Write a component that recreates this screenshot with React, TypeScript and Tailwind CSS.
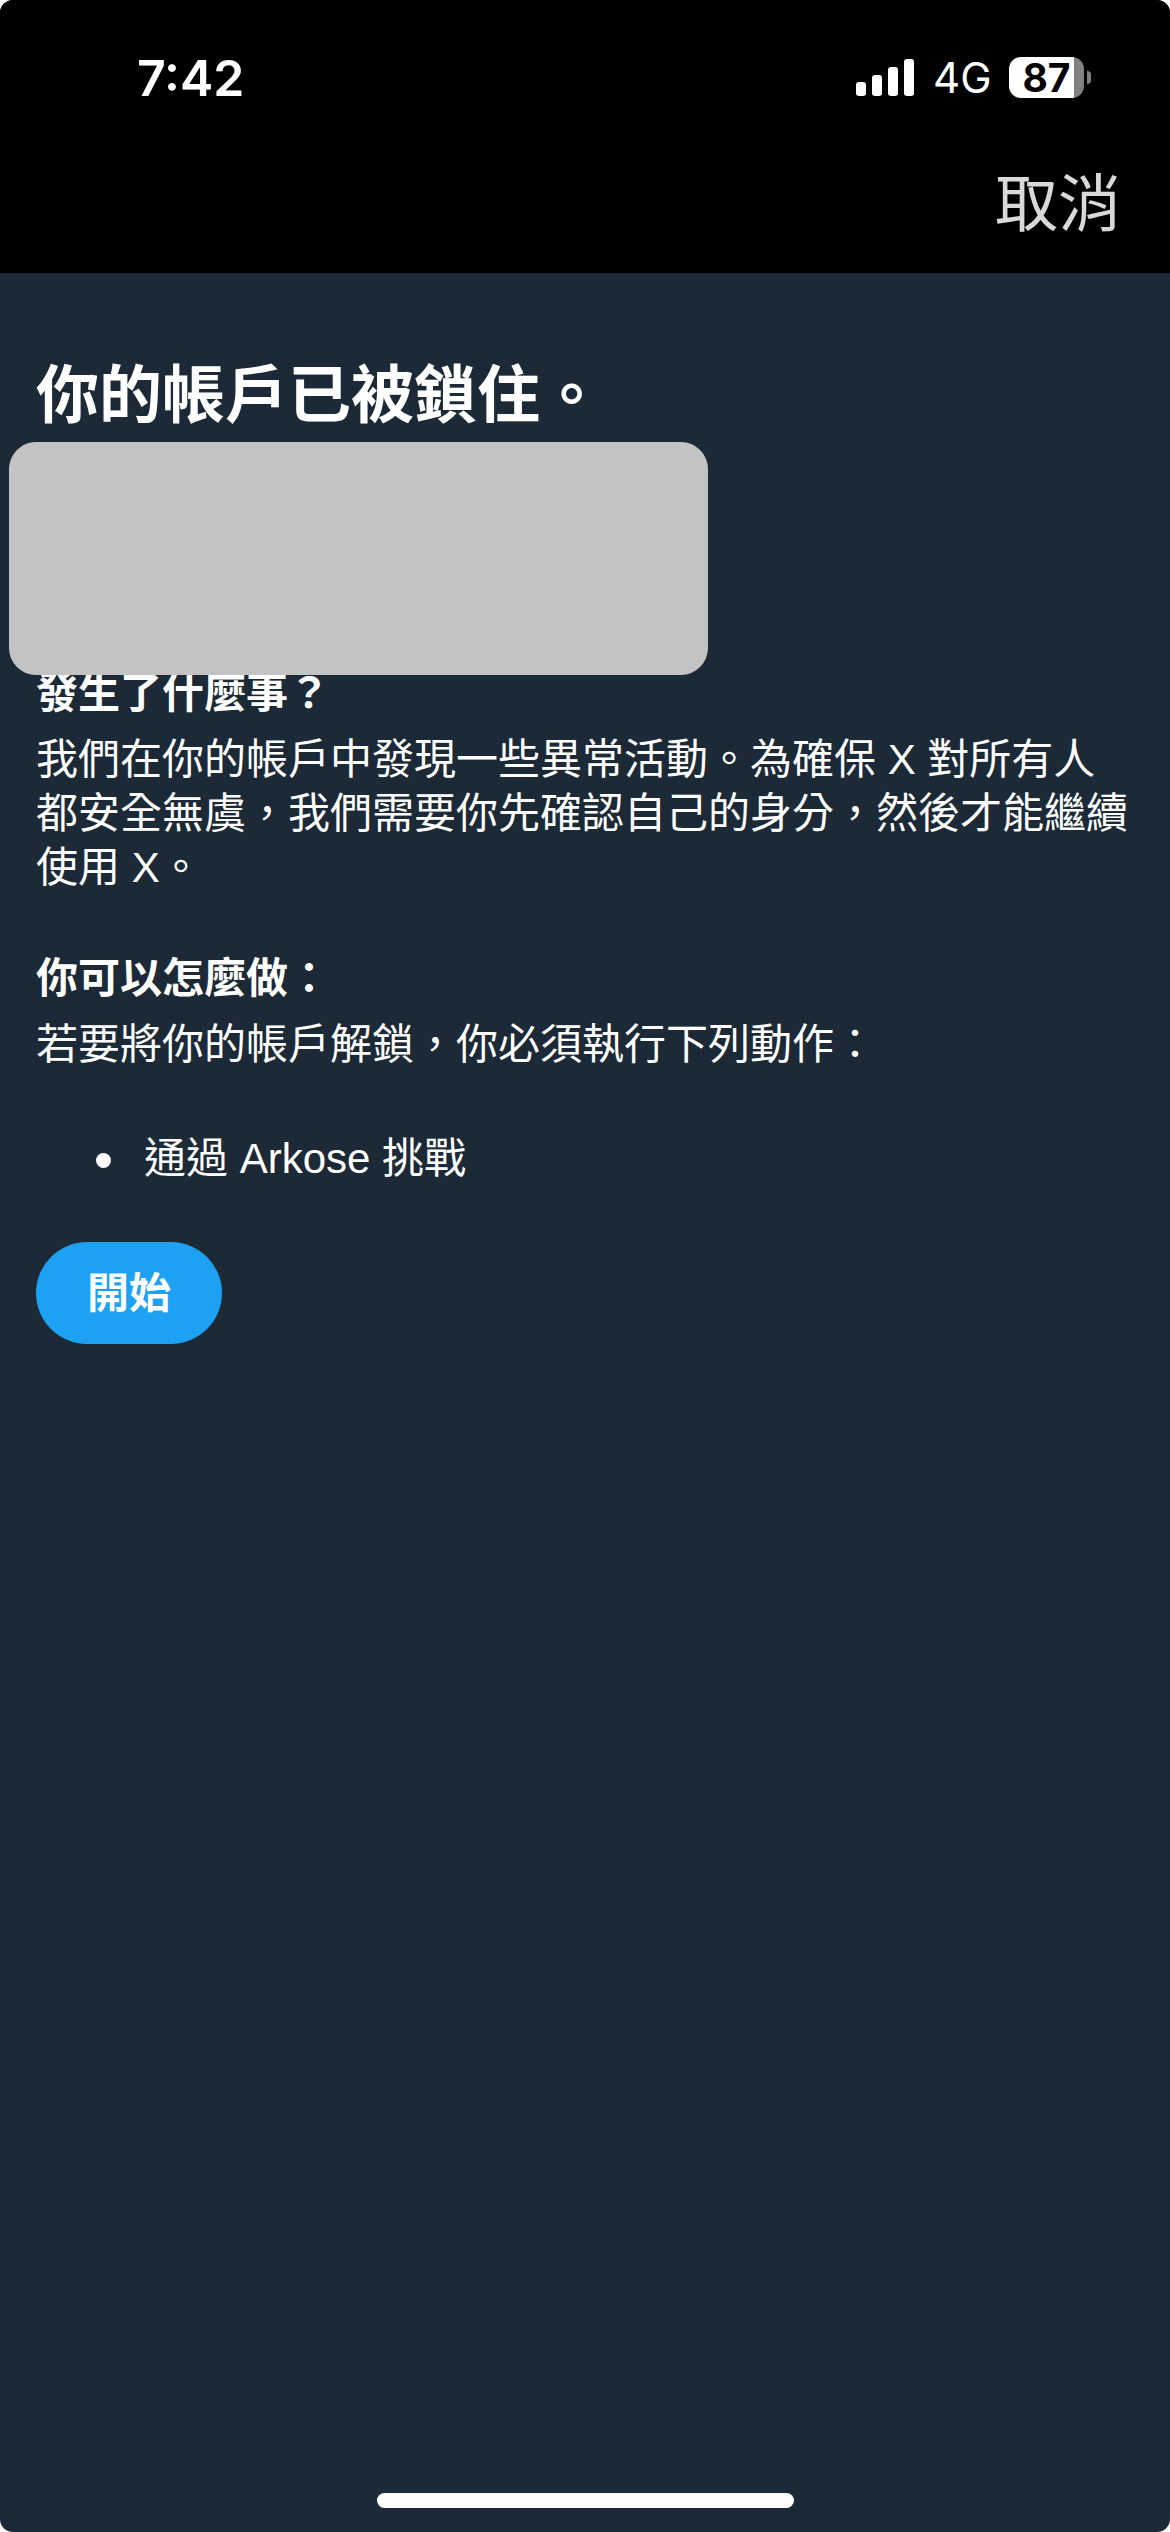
const signal = [14, 21, 29, 37];

function StatusBar() {
  return (
    <div className="flex h-[150px] items-start justify-between pl-[137px] pr-[79px] font-['Inter',sans-serif] text-white">
      <div className="mt-[48px] text-[50px] leading-[60px] font-semibold">7:42</div>
      <div className="mt-[57px] flex h-[41px] items-center">
        <div className="flex h-[37px] items-end gap-[6px]">
          {signal.map((h) => (
            <div key={h} className="w-[10px] rounded-[3px] bg-white" style={{ height: h }} />
          ))}
        </div>
        <span className="ml-[19px] w-[58px] text-[42px] leading-[43px]">4G</span>
        <div className="ml-[18px] flex h-[41px] w-[75px] items-center justify-center rounded-[12px] bg-linear-to-r from-white from-[65px] to-[#808080] to-[65px]">
          <span className="text-[39px] leading-[41px] font-bold text-black">87</span>
        </div>
        <div className="ml-[3px] h-[13px] w-[4px] rounded-r-full bg-[#808080]" />
      </div>
    </div>
  );
}

export default function App() {
  return (
    <div className="h-[2532px] w-[1170px] bg-white">
      <div
        lang="zh-Hant"
        className="relative flex h-full flex-col overflow-hidden rounded-[13px] bg-[#1c2936] font-['Liberation_Sans','Noto_Sans_CJK_TC',sans-serif] text-[42px] leading-[54px] text-white"
      >
        <header className="h-[273px] shrink-0 bg-black">
          <StatusBar />
          <div className="flex justify-end pr-[49px]">
            <button className="mt-[14px] text-[63px] leading-[80px] text-[#d9d9d9]">取消</button>
          </div>
        </header>

        <main className="flex flex-1 flex-col items-start px-[36px]">
          <h1 className="mt-[82px] text-[63px] leading-[80px] font-bold">你的帳戶已被鎖住。</h1>
          {/* covers the account name */}
          <div className="relative z-10 mt-[7px] -ml-[27px] h-[233px] w-[699px] rounded-[27px] bg-[#c3c3c3]" />
          <h2 className="-mt-[8px] font-bold">發生了什麼事？</h2>
          <p className="mt-[12px] -mr-[10px]">
            我們在你的帳戶中發現一些異常活動。為確保 X 對所有人
            <br />
            都安全無虞，我們需要你先確認自己的身分，然後才能繼續
            <br />
            使用 X。
          </p>
          <h2 className="mt-[57px] font-bold">你可以怎麼做：</h2>
          <p className="mt-[12px]">若要將你的帳戶解鎖，你必須執行下列動作：</p>
          <ul className="mt-[60px] pl-[60px]">
            <li className="flex items-center">
              <span className="mt-[2px] mr-[33px] size-[15px] rounded-full bg-white" />
              通過 Arkose 挑戰
            </li>
          </ul>
          <button className="mt-[56px] h-[102px] w-[186px] rounded-full bg-[#1da1f2] pt-[2px] font-bold">開始</button>
        </main>

        <div className="mb-[24px] h-[15px] w-[417px] self-center rounded-full bg-white" />
      </div>
    </div>
  );
}
